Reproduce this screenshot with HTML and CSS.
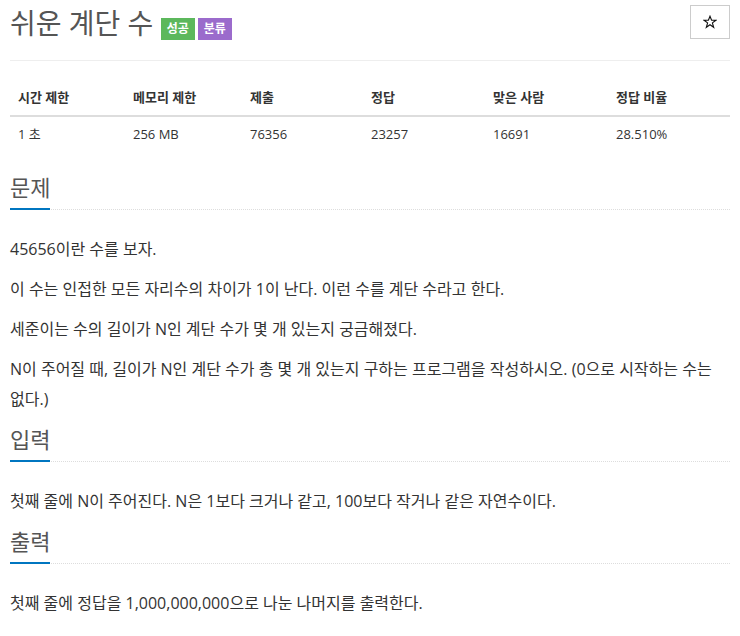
FILE: index.html
```html
<!DOCTYPE html>
<html lang="ko">
<head>
    <meta charset="UTF-8">
    <meta name="viewport" content="width=device-width, initial-scale=1.0">
    <title>쉬운 계단 수</title>
    <link rel="stylesheet" href="styles.css">
</head>
<body>
    <div class="page">
        <div class="title-row">
            <h1 class="title">쉬운 계단 수 <span class="label label-success">성공</span><span class="label label-purple">분류</span></h1>
            <button class="star-btn" type="button">
                <svg width="14" height="14" viewBox="0 0 14 14"><path d="M7 1.2 8.6 5.3 12.9 5.3 9.4 7.9 10.7 12.3 7 9.7 3.3 12.3 4.6 7.9 1.1 5.3 5.4 5.3Z" fill="none" stroke="#111" stroke-width="1.1" stroke-linejoin="miter"/></svg>
            </button>
        </div>

        <table class="info">
            <colgroup>
                <col class="c1"><col class="c2"><col class="c3"><col class="c4"><col class="c5"><col class="c6">
            </colgroup>
            <thead>
                <tr>
                    <th>시간 제한</th>
                    <th>메모리 제한</th>
                    <th>제출</th>
                    <th>정답</th>
                    <th>맞은 사람</th>
                    <th>정답 비율</th>
                </tr>
            </thead>
            <tbody>
                <tr>
                    <td>1 초</td>
                    <td>256 MB</td>
                    <td>76356</td>
                    <td>23257</td>
                    <td>16691</td>
                    <td>28.510%</td>
                </tr>
            </tbody>
        </table>

        <section class="problem-section">
            <div class="headline"><h2>문제</h2></div>
            <div class="problem-text">
                <p>45656이란 수를 보자.</p>
                <p>이 수는 인접한 모든 자리수의 차이가 1이 난다. 이런 수를 계단 수라고 한다.</p>
                <p>세준이는 수의 길이가 N인 계단 수가 몇 개 있는지 궁금해졌다.</p>
                <p>N이 주어질 때, 길이가 N인 계단 수가 총 몇 개 있는지 구하는 프로그램을 작성하시오. (0으로 시작하는 수는 없다.)</p>
            </div>
        </section>

        <section class="problem-section">
            <div class="headline"><h2>입력</h2></div>
            <div class="problem-text">
                <p>첫째 줄에 N이 주어진다. N은 1보다 크거나 같고, 100보다 작거나 같은 자연수이다.</p>
            </div>
        </section>

        <section class="problem-section">
            <div class="headline"><h2>출력</h2></div>
            <div class="problem-text">
                <p>첫째 줄에 정답을 1,000,000,000으로 나눈 나머지를 출력한다.</p>
            </div>
        </section>
    </div>
</body>
</html>
```

FILE: styles.css
```css
body {
    font-family: "Open Sans", "Noto Sans CJK KR", sans-serif;
    color: #333;
    background: #fff;
    margin: 0;
}
.page {
    padding: 0 10px;
}
.title-row {
    display: flex;
    justify-content: space-between;
    align-items: flex-start;
    padding: 5px 0 20px;
    border-bottom: 1px solid #eee;
}
.title {
    margin: 2px 0 0;
    font-size: 28px;
    font-weight: normal;
    line-height: 32px;
    color: #555;
}
.label {
    display: inline-block;
    font-size: 12px;
    font-weight: bold;
    line-height: 12px;
    color: #fff;
    padding: 5px 6px;
    vertical-align: 1px;
}
.label + .label {
    margin-left: 3px;
}
.label-success {
    background: #5cb85c;
}
.label-purple {
    background: #9b6bcc;
}
.star-btn {
    width: 40px;
    height: 34px;
    border: 1px solid #ccc;
    background: #fff;
    padding: 0;
    display: flex;
    align-items: center;
    justify-content: center;
}
.star-btn svg {
    display: block;
}
.info {
    width: 100%;
    table-layout: fixed;
    border-collapse: collapse;
    margin-top: 19px;
    font-size: 13px;
}
.c1 { width: 115px; }
.c2 { width: 117px; }
.c3 { width: 121px; }
.c4 { width: 122px; }
.c5 { width: 123px; }
.info th,
.info td {
    text-align: left;
    padding: 8px;
    line-height: 19px;
}
.info th {
    border-bottom: 2px solid #ddd;
}
.problem-section {
    margin-top: 20px;
}
.problem-section + .problem-section {
    margin-top: 7px;
}
.headline {
    border-bottom: 1px dotted #ddd;
}
.headline h2 {
    display: inline-block;
    margin: 0 0 -1px;
    padding-bottom: 6px;
    font-size: 22px;
    font-weight: normal;
    line-height: 30px;
    color: #555;
    border-bottom: 2px solid #0076c0;
}
.problem-text {
    margin-top: 24px;
    font-size: 16px;
    line-height: 30px;
}
.problem-text p {
    margin: 0 0 10px;
}
```
